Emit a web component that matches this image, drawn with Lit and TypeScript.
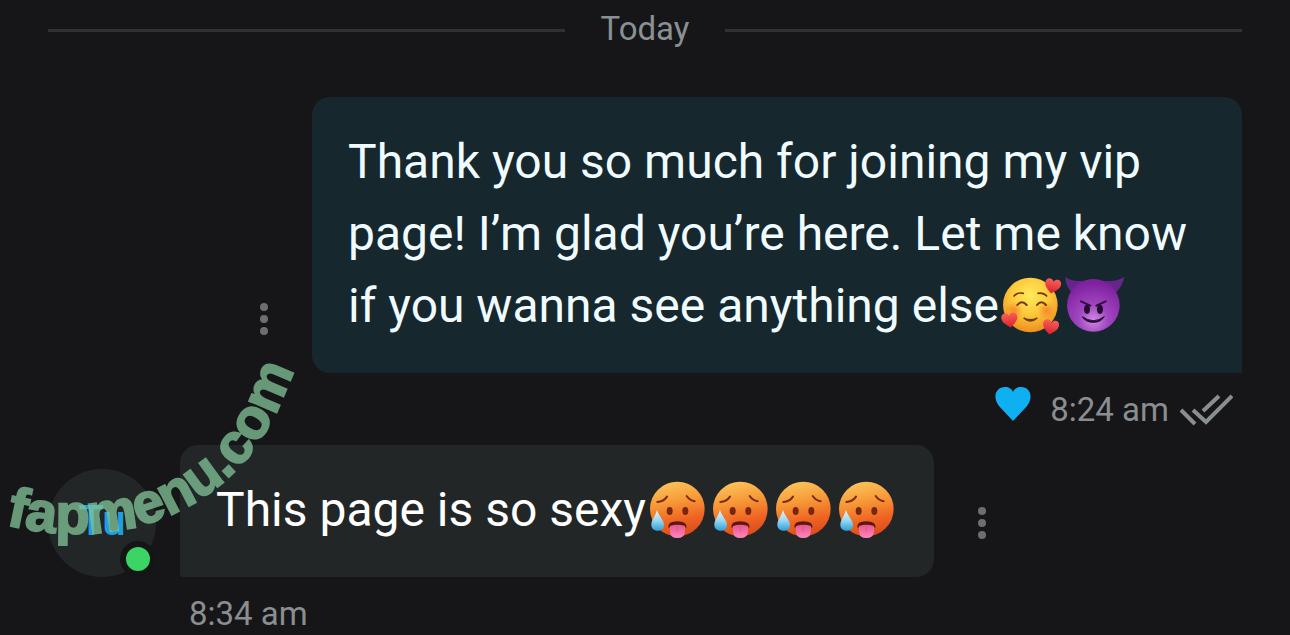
import { LitElement, html, css, svg } from "lit";
import { customElement, property } from "lit/decorators.js";

const loveFace = svg`
  <defs>
    <radialGradient id="face" cx="0.5" cy="0.32" r="0.7">
      <stop offset="0" stop-color="#ffe95c" />
      <stop offset="0.5" stop-color="#fdc93a" />
      <stop offset="1" stop-color="#ee8a1c" />
    </radialGradient>
    <radialGradient id="blush">
      <stop offset="0" stop-color="#f47a2c" stop-opacity="0.75" />
      <stop offset="1" stop-color="#f47a2c" stop-opacity="0" />
    </radialGradient>
    <linearGradient id="heart" x1="0" y1="0" x2="0" y2="1">
      <stop offset="0" stop-color="#f9605a" />
      <stop offset="1" stop-color="#d8202c" />
    </linearGradient>
    <path id="h" d="M0 23C-10 14-24 6-24-8C-24-23-6-26 0-13C6-26 24-23 24-8C24 6 10 14 0 23Z" />
  </defs>
  <circle cx="148" cy="121" r="82" fill="url(#face)" />
  <circle cx="99" cy="137" r="27" fill="url(#blush)" />
  <circle cx="196" cy="137" r="27" fill="url(#blush)" />
  <g fill="none" stroke="#6d3a10" stroke-linecap="round">
    <path d="M99 94Q110 82 127 86M171 86Q187 83 197 94" stroke-width="5" />
    <path d="M109 121Q122 104 137 121M168 121Q181 104 195 121" stroke-width="6" />
    <path d="M128 160Q148 178 169 160Q148 170 128 160Z" stroke-width="4" fill="#6d3a10" />
  </g>
  <g fill="url(#heart)">
    <use href="#h" transform="translate(215 64) rotate(12)" />
    <use href="#h" transform="translate(86 166) rotate(-8)" />
    <use href="#h" transform="translate(209 187) rotate(10)" />
  </g>
`;

const devilFace = svg`
  <defs>
    <radialGradient id="face" cx="0.5" cy="0.78" r="0.72">
      <stop offset="0" stop-color="#cf8ae4" />
      <stop offset="0.4" stop-color="#a045c0" />
      <stop offset="1" stop-color="#7f219f" />
    </radialGradient>
  </defs>
  <path d="M254 36Q275 53 307 48L275 84Q254 66 254 36ZM431 36Q405 53 371 48L405 84Q425 66 431 36Z" fill="#65258a" />
  <circle cx="338" cy="122" r="79" fill="url(#face)" />
  <path d="M301 110L329 123M375 110L347 123" stroke="#30103f" stroke-width="6" stroke-linecap="round" />
  <ellipse cx="319" cy="134" rx="9" ry="14" fill="#260c33" />
  <ellipse cx="358" cy="134" rx="9" ry="14" fill="#260c33" />
  <path d="M305 156Q338 180 371 156Q360 173 338 173Q315 173 305 156Z" fill="#260c33" stroke="#260c33" stroke-width="3" stroke-linejoin="round" />
`;

const hotFace = svg`
  <defs>
    <linearGradient id="face" x1="0.4" y1="0" x2="0.6" y2="1">
      <stop offset="0" stop-color="#fbc35a" />
      <stop offset="0.35" stop-color="#f79a38" />
      <stop offset="0.7" stop-color="#ef6423" />
      <stop offset="1" stop-color="#d94a1c" />
    </linearGradient>
    <linearGradient id="drop" x1="0" y1="0" x2="0" y2="1">
      <stop offset="0" stop-color="#e8f8ff" />
      <stop offset="0.5" stop-color="#9bd9f3" />
      <stop offset="1" stop-color="#2f9fd8" />
    </linearGradient>
    <linearGradient id="tongue" x1="0" y1="0" x2="0" y2="1">
      <stop offset="0" stop-color="#e8578c" />
      <stop offset="1" stop-color="#ff86bd" />
    </linearGradient>
  </defs>
  <circle cx="111" cy="118" r="82" fill="url(#face)" />
  <g fill="none" stroke="#7a2c10" stroke-width="6" stroke-linecap="round">
    <path d="M51 97Q70 96 80 81M139 79Q148 92 163 95" />
  </g>
  <ellipse cx="88" cy="124" rx="9" ry="12" fill="#78260f" />
  <ellipse cx="135" cy="124" rx="9" ry="12" fill="#78260f" />
  <path d="M84 174Q82 155 111 155Q139 155 139 174Q125 168 111 168Q97 168 84 174Z" fill="#5d170f" />
  <path d="M89 169Q111 162 134 169V187Q132 205 111 205Q90 205 89 187Z" fill="url(#tongue)" />
  <path d="M111 170V186" stroke="#d8508a" stroke-width="2" stroke-linecap="round" />
  <path d="M50 120C54 138 71 150 71 165C71 177 62 183 52 183C41 183 33 176 33 165C33 150 46 138 50 120Z" fill="url(#drop)" />
`;

const faces = {
  love: { label: "smiling face with hearts", box: "54 31 189 180", art: loveFace },
  devil: { label: "smiling face with horns", box: "244 31 189 180", art: devilFace },
  hot: { label: "hot face", box: "17 28 189 180", art: hotFace },
};

@customElement("chat-emoji")
export class ChatEmoji extends LitElement {
  @property() kind: keyof typeof faces = "love";

  static styles = css`
    :host {
      display: inline-block;
      width: 63px;
      height: 60px;
      vertical-align: -13px;
    }
    .art {
      display: block;
      width: 100%;
      height: 100%;
      overflow: visible;
    }
  `;

  render() {
    const face = faces[this.kind];
    return html`<svg class="art" role="img" aria-label=${face.label} viewBox=${face.box}>${face.art}</svg>`;
  }
}

@customElement("app-root")
export class AppRoot extends LitElement {
  static styles = css`
    :host {
      display: block;
      position: relative;
      box-sizing: border-box;
      min-height: 100vh;
      max-height: 100vh;
      overflow: hidden;
      padding: 7px 48px 0;
      background: #161618;
      color: #fff;
      font-family: Roboto, "Liberation Sans", sans-serif;
    }
    .day {
      display: flex;
      align-items: center;
      gap: 36px;
      margin-bottom: 46px;
      color: #8a9093;
      font-size: 33px;
      line-height: 44px;
    }
    .rule {
      flex: 1;
      height: 3px;
      margin-top: 3px;
      background: #303133;
    }
    .row {
      display: flex;
      align-items: flex-end;
      gap: 24px;
    }
    .sent {
      padding-left: 192px;
    }
    .bubble {
      padding: 29px 36px 31px;
      border-radius: 18px;
      font-size: 48px;
      line-height: 72px;
    }
    .text {
      margin: 0;
    }
    .sent .bubble {
      flex: 1;
      background: #16272e;
      color: #f0fbff;
      border-bottom-right-radius: 0;
    }
    .received .bubble {
      background: #222627;
      border-bottom-left-radius: 3px;
    }
    .more {
      flex: none;
      width: 48px;
      height: 48px;
      margin: 0 0 30px;
      padding: 0;
      border: 0;
      background: none;
      color: #6d6e70;
      cursor: pointer;
    }
    .icon {
      display: block;
      flex: none;
    }
    .meta {
      display: flex;
      align-items: center;
      justify-content: flex-end;
      padding: 2px 9px 0;
      color: #8a8e91;
      font-size: 33px;
      line-height: 70px;
    }
    .meta-received {
      justify-content: flex-start;
      padding-left: 141px;
    }
    .like {
      margin: 0 19px 12px 0;
      padding: 0;
      border: 0;
      background: none;
      cursor: pointer;
    }
    .seen {
      margin-left: 10px;
    }
    .avatar {
      position: relative;
      flex: none;
      width: 108px;
      height: 108px;
      border-radius: 50%;
      background: #222627;
      color: #209fe0;
      font-size: 42px;
      font-weight: 500;
      line-height: 104px;
      text-align: center;
      text-decoration: none;
    }
    .online {
      position: absolute;
      right: 0;
      bottom: 0;
      width: 24px;
      height: 24px;
      border: 6px solid #141616;
      border-radius: 50%;
      background: #3ad564;
    }
    .mark {
      position: absolute;
      left: 0;
      bottom: 0;
      pointer-events: none;
    }
    .mark-text {
      fill: #82c598;
      stroke: #82c598;
      stroke-width: 2px;
      opacity: 0.75;
      font: bold 56px "Liberation Sans", Arial, sans-serif;
    }
  `;

  private moreButton() {
    return html`
      <button class="more" type="button" aria-label="Message options">
        <svg class="icon" width="48" height="48" viewBox="0 0 48 48" fill="currentColor">
          <circle cx="24" cy="12" r="4" />
          <circle cx="24" cy="24" r="4" />
          <circle cx="24" cy="36" r="4" />
        </svg>
      </button>
    `;
  }

  render() {
    return html`
      <div class="day"><span class="rule"></span><span>Today</span><span class="rule"></span></div>

      <div class="row sent">
        ${this.moreButton()}
        <div class="bubble">
          <p class="text">Thank you so much for joining my vip page! I’m glad you’re here. Let me know if you wanna see anything else<chat-emoji kind="love"></chat-emoji><chat-emoji kind="devil"></chat-emoji></p>
        </div>
      </div>
      <div class="meta">
        <button class="like" type="button" aria-label="Like">
          <svg class="icon" width="36" height="36" viewBox="0 0 36 36">
            <path d="M18 35L4 20C-3 11 1 1 10 1C14 1 17 3 18 6C19 3 22 1 26 1C35 1 39 11 32 20Z" fill="#0fb0f2" />
          </svg>
        </button>
        <time>8:24 am</time>
        <svg class="icon seen" width="54" height="34" viewBox="0 0 54 34" fill="none" stroke="currentColor" stroke-width="4">
          <path d="M2 17L16 31M14 17L27 29L53 3M24 18L40 3" />
        </svg>
      </div>

      <div class="row received">
        <a class="avatar" href="#profile">Tu<span class="online"></span></a>
        <div class="bubble">
          <p class="text">This page is so sexy${[0, 1, 2, 3].map(() => html`<chat-emoji kind="hot"></chat-emoji>`)}</p>
        </div>
        ${this.moreButton()}
      </div>
      <div class="meta meta-received"><time>8:34 am</time></div>

      <svg class="mark" width="310" height="285" viewBox="0 350 310 285">
        <defs>
          <path id="curve" d="M6 525C60 538 130 539 190 505C250 471 275 425 301 350" />
        </defs>
        <text class="mark-text"><textPath href="#curve">fapmenu.com</textPath></text>
      </svg>
    `;
  }
}
